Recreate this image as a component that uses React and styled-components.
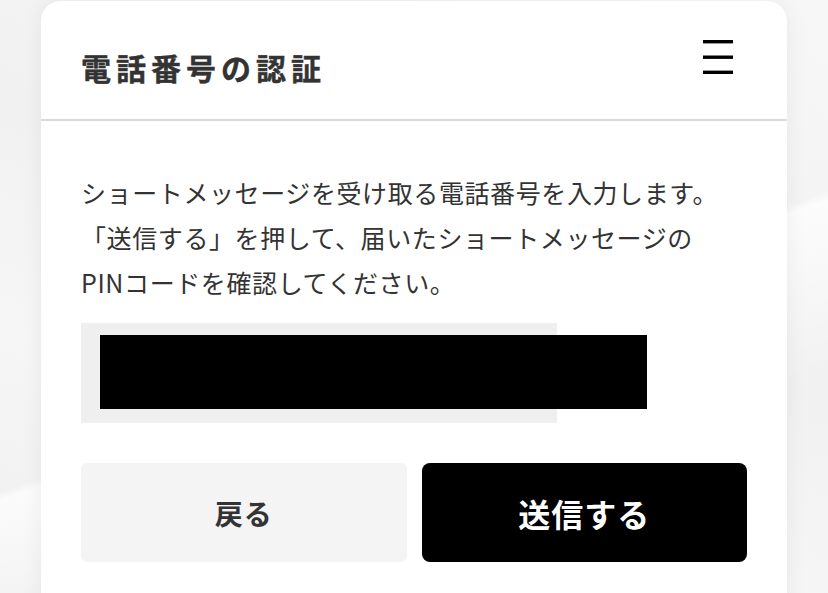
import styled, { createGlobalStyle } from "styled-components";

const GlobalStyle = createGlobalStyle`
  html, body {
    margin: 0;
    padding: 0;
    height: 100%;
    overflow: hidden;
  }
  body {
    font-family: "Noto Sans CJK JP", "Noto Sans", sans-serif;
    background:
      linear-gradient(160deg, transparent 55%, rgba(255,255,255,0.7) 56%, transparent 75%),
      linear-gradient(200deg, #f7f7f7 0%, #f1f1f1 45%, #f6f6f6 70%, #efefef 100%);
  }
`;

const Page = styled.div`
  padding: 1px 0 0 41px;
  height: 593px;
  box-sizing: border-box;
`;

const Card = styled.section`
  width: 746px;
  min-height: 620px;
  background: #fff;
  border-radius: 20px 20px 0 0;
  box-shadow: 0 0 22px rgba(0, 0, 0, 0.06);
`;

const Header = styled.header`
  height: 118px;
  display: flex;
  align-items: center;
  justify-content: space-between;
  padding: 0 54px 0 40px;
  border-bottom: 2px solid #d9d9d9;
`;

const Title = styled.h1`
  margin: 0;
  padding-top: 14px;
  font-size: 30px;
  font-weight: 700;
  letter-spacing: 5px;
  color: #333;
  -webkit-text-stroke: 0.4px #333;
`;

const MenuButton = styled.button`
  border: 0;
  background: none;
  padding: 0;
  width: 30px;
  height: 34px;
  margin-bottom: 6px;
  display: flex;
  cursor: pointer;
`;

const Body = styled.div`
  padding: 49px 40px 0;
`;

const Lead = styled.p`
  margin: 0;
  font-size: 25px;
  line-height: 45px;
  letter-spacing: 0.6px;
  color: #333;
`;

const PhoneField = styled.div`
  position: relative;
  width: 476px;
  height: 100px;
  margin-top: 18px;
  background: #efefef;
`;

const Redaction = styled.div`
  position: absolute;
  left: 19px;
  top: 12px;
  width: 547px;
  height: 74px;
  background: #000;
`;

const Actions = styled.div`
  display: flex;
  gap: 15px;
  margin-top: 40px;
`;

const Button = styled.button`
  flex: 1;
  height: 99px;
  border: 0;
  border-radius: ${(p) => (p.$primary ? "8px" : "6px")};
  background: ${(p) => (p.$primary ? "#000" : "#f4f4f4")};
  color: ${(p) => (p.$primary ? "#fff" : "#333")};
  font-family: inherit;
  font-weight: 700;
  font-size: ${(p) => (p.$primary ? "32px" : "28px")};
  letter-spacing: 1px;
  cursor: pointer;
`;

const MenuIcon = () => (
  <svg width="30" height="34" viewBox="0 0 30 34">
    <rect x="0" y="0" width="30" height="3.4" fill="#000" />
    <rect x="0" y="15.5" width="30" height="3.4" fill="#000" />
    <rect x="0" y="30.6" width="30" height="3.4" fill="#000" />
  </svg>
);

export default function App() {
  return (
    <>
      <GlobalStyle />
      <Page>
        <Card>
          <Header>
            <Title>電話番号の認証</Title>
            <MenuButton aria-label="メニュー">
              <MenuIcon />
            </MenuButton>
          </Header>
          <Body>
            <Lead>
              ショートメッセージを受け取る電話番号を入力します。
              <br />
              「送信する」を押して、届いたショートメッセージの
              <br />
              PINコードを確認してください。
            </Lead>
            <PhoneField>
              <Redaction />
            </PhoneField>
            <Actions>
              <Button>戻る</Button>
              <Button $primary>送信する</Button>
            </Actions>
          </Body>
        </Card>
      </Page>
    </>
  );
}
